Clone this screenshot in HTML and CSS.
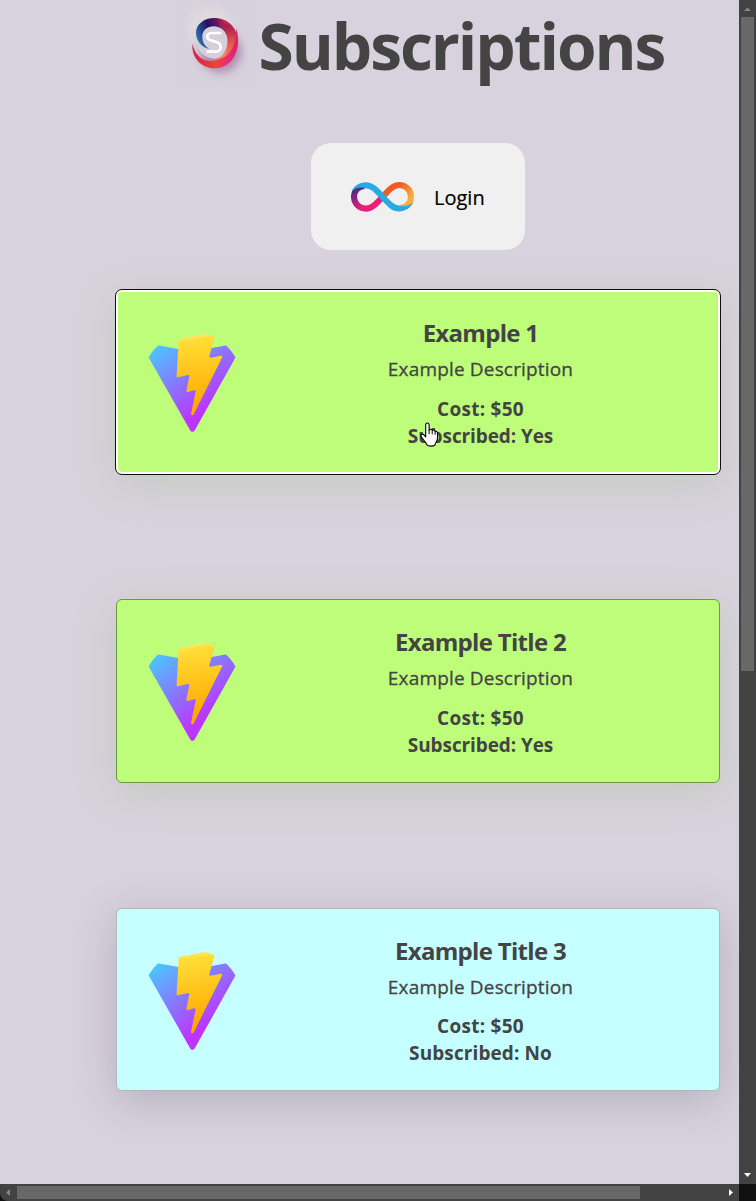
FILE: index.html
```html
<!DOCTYPE html>
<html lang="en">
<head>
<meta charset="utf-8">
<title>Subscriptions</title>
<link rel="stylesheet" href="styles.css">
</head>
<body>
<svg width="0" height="0" class="defs" aria-hidden="true">
  <defs>
    <linearGradient id="shield" x1="-.828%" x2="57.636%" y1="7.652%" y2="78.411%"><stop offset="0" stop-color="#41D1FF"/><stop offset="1" stop-color="#BD34FE"/></linearGradient>
    <linearGradient id="bolt" x1="43.376%" x2="50.316%" y1="2.242%" y2="89.03%"><stop offset="0" stop-color="#FFEA83"/><stop offset=".0833" stop-color="#FFDD35"/><stop offset="1" stop-color="#FFA800"/></linearGradient>
    <symbol id="vite" viewBox="0 0 256 257">
      <path fill="url(#shield)" d="M255.153 37.938L134.897 252.976c-2.483 4.44-8.862 4.466-11.382.048L.875 37.958c-2.746-4.814 1.371-10.646 6.827-9.67l120.385 21.517a6.537 6.537 0 0 0 2.322-.004l117.867-21.483c5.438-.991 9.574 4.796 6.877 9.62Z"/>
      <path fill="url(#bolt)" d="M185.432.063L96.44 17.501a3.268 3.268 0 0 0-2.634 3.014l-5.474 92.456a3.268 3.268 0 0 0 3.997 3.378l24.777-5.718c2.318-.535 4.413 1.507 3.936 3.838l-7.361 36.047c-.495 2.426 1.782 4.5 4.151 3.78l15.304-4.649c2.372-.72 4.652 1.36 4.15 3.788l-11.698 56.621c-.732 3.542 3.979 5.473 5.943 2.437l1.313-2.028l72.516-144.72c1.215-2.423-.88-5.186-3.54-4.672l-25.505 4.922c-2.396.462-4.435-1.77-3.759-4.114l16.646-57.705c.677-2.35-1.37-4.583-3.769-4.113Z"/>
    </symbol>
  </defs>
</svg>
<div class="window">
  <main class="page">
    <header class="header">
      <svg class="brand" viewBox="0 0 249 252">
        <defs>
          <linearGradient id="ringTop" x1="66" y1="145" x2="190" y2="95" gradientUnits="userSpaceOnUse"><stop offset="0" stop-color="#2d8fc0"/><stop offset=".25" stop-color="#25408c"/><stop offset=".42" stop-color="#24125f"/><stop offset=".62" stop-color="#5d1760"/><stop offset=".82" stop-color="#c9264b"/><stop offset="1" stop-color="#b51c43"/></linearGradient>
          <linearGradient id="ringLow" x1="70" y1="140" x2="200" y2="150" gradientUnits="userSpaceOnUse"><stop offset="0" stop-color="#d72945"/><stop offset=".45" stop-color="#f0413e"/><stop offset=".75" stop-color="#e22b78"/><stop offset="1" stop-color="#d71d49"/></linearGradient>
          <linearGradient id="ringIn" x1="150" y1="80" x2="160" y2="190" gradientUnits="userSpaceOnUse"><stop offset="0" stop-color="#a31f50"/><stop offset=".45" stop-color="#ee5a4a"/><stop offset=".8" stop-color="#f98455"/><stop offset="1" stop-color="#f04b45"/></linearGradient>
          <filter id="soft" x="-60%" y="-60%" width="220%" height="220%"><feGaussianBlur stdDeviation="15"/></filter>
        </defs>
        <rect width="249" height="252" fill="#d5d1dc" opacity=".65"/>
        <circle cx="104" cy="88" r="70" fill="#e4dde0" opacity=".65" filter="url(#soft)"/>
        <circle cx="136" cy="154" r="62" fill="#a36d9d" opacity=".75" filter="url(#soft)"/>
        <circle cx="118" cy="124" r="52" fill="#d3cfdb"/>
        <path fill="url(#ringTop)" d="M106 148C78 142 63 121 63 99C63 72 88 54 118 54C158 54 188 82 188 125C188 165 157 190 128 190C153 174 162 151 159 119C156 94 137 79 116 79C94 79 80 94 82 114C84 132 92 141 106 148Z"/>
        <path fill="url(#ringIn)" d="M133 66C172 74 188 98 186 127C181 170 144 193 104 185C140 178 158 153 157 119C156 100 147 87 133 80Z" opacity=".9"/>
        <path fill="url(#ringLow)" d="M53 131C60 166 82 187 119 182C157 177 183 149 184 85C201 142 177 204 119 205C76 204 47 168 53 131Z"/>
        <path d="M139 99H110C99 99 95 107 98 114C102 125 132 122 136 135C140 147 134 155 121 155H95" fill="none" stroke="#fff" stroke-width="8"/>
      </svg>
      <h1 class="title">Subscriptions</h1>
    </header>
    <button class="login">
      <svg class="infinity" viewBox="153 156 187 88">
        <defs>
          <linearGradient id="pink" x1="165" y1="170" x2="205" y2="235" gradientUnits="userSpaceOnUse"><stop offset=".1" stop-color="#522785"/><stop offset=".85" stop-color="#ed1e79"/></linearGradient>
          <linearGradient id="orange" x1="270" y1="160" x2="335" y2="215" gradientUnits="userSpaceOnUse"><stop offset=".25" stop-color="#f15a24"/><stop offset=".9" stop-color="#fbb03b"/></linearGradient>
        </defs>
        <path d="M246.500 199.500C228 220 215 234.500 197 234.500C177 234.500 162 219 162 199.500C162 181 175 168 193 167" fill="none" stroke="url(#pink)" stroke-width="18"/>
        <path d="M246.500 199.500C265 179 278 164.500 296 164.500C316 164.500 331 180 331 199.500C331 218 318 231 300 232" fill="none" stroke="url(#orange)" stroke-width="18"/>
        <path d="M197 165C215 165 228 179 246.500 199.500S278 234 296 234" fill="none" stroke="#29abe2" stroke-width="18"/>
        <path d="M198 156C178 156 161 168 155 184C166 173 180 169 198 174Z" fill="#29abe2"/>
        <path d="M295 243C315 243 332 231 338 215C327 226 313 230 295 225Z" fill="#29abe2"/>
      </svg>
      <span class="login-label">Login</span>
    </button>
    <section class="cards">
      <article class="card subscribed focused">
        <svg class="card-logo"><use href="#vite"/></svg>
        <div class="card-body">
          <h2 class="card-title">Example 1</h2>
          <p class="description">Example Description</p>
          <p class="fact cost">Cost: $50</p>
          <p class="fact status">Subscribed: Yes</p>
        </div>
        <svg class="pointer" viewBox="0 0 18 25">
          <path d="M5.700 15V2.800C5.700 .3 9.100 .3 9.100 2.800V8.200C10.100 6.700 12 7.100 12.200 8.500C13.400 7.500 15 8.100 15.100 9.500C16.400 8.900 17.500 9.800 17.500 11.300V16C17.500 19 15.300 20.600 15 23C13 24.500 8.500 24.500 7 22.900C5.800 20.200 3.300 18.200 1.300 14.700C.2 12.900 2.300 11.200 3.900 12.800Z" fill="#fff" stroke="#000" stroke-width="1.100" stroke-linejoin="round"/>
          <path d="M9.100 8V12.200M12.200 8.500V12.400M15.100 9.500V12.800" stroke="#000" fill="none"/>
        </svg>
      </article>
      <article class="card subscribed">
        <svg class="card-logo"><use href="#vite"/></svg>
        <div class="card-body">
          <h2 class="card-title">Example Title 2</h2>
          <p class="description">Example Description</p>
          <p class="fact cost">Cost: $50</p>
          <p class="fact status">Subscribed: Yes</p>
        </div>
      </article>
      <article class="card available">
        <svg class="card-logo"><use href="#vite"/></svg>
        <div class="card-body">
          <h2 class="card-title">Example Title 3</h2>
          <p class="description">Example Description</p>
          <p class="fact cost">Cost: $50</p>
          <p class="fact status">Subscribed: No</p>
        </div>
      </article>
    </section>
  </main>
  <div class="scroll vertical">
    <svg class="arrow dim" viewBox="0 0 17 17"><path d="M5 11L8.500 7.500L12 11Z"/></svg>
    <div class="thumb"></div>
    <svg class="arrow" viewBox="0 0 17 17"><path d="M5 6H12L8.500 10Z"/></svg>
  </div>
  <div class="scroll horizontal">
    <svg class="arrow dim" viewBox="0 0 17 17"><path d="M10 5V12L6 8.500Z"/></svg>
    <div class="thumb"></div>
    <svg class="arrow" viewBox="0 0 17 17"><path d="M7 5L11 8.500L7 12Z"/></svg>
  </div>
  <div class="corner"></div>
</div>
</body>
</html>
```
FILE: styles.css
```css
* { box-sizing: border-box; }
body {
  margin: 0;
  background: #111;
  color: #444;
  font-family: "Segoe UI", "Open Sans", "Noto Sans", sans-serif;
}
h1, h2, p { margin: 0; }
.defs { position: absolute; }
.window {
  display: grid;
  grid-template: 1184px 17px / 739px 17px;
  height: 1201px;
  overflow: hidden;
  border-bottom-left-radius: 8px;
}
.page {
  display: flex;
  flex-direction: column;
  align-items: center;
  padding-left: 97px;
  background: #d8d2de;
  overflow: hidden;
}
.header {
  display: flex;
  height: 143px;
  width: 487px;
  flex-shrink: 0;
}
.brand { width: 83px; height: 84px; flex-shrink: 0; }
.title {
  font-size: 64px;
  line-height: 70px;
  font-weight: 700;
  letter-spacing: -2.05px;
  margin-top: 11px;
  margin-left: 1px;
  white-space: nowrap;
}
.login {
  display: flex;
  align-items: center;
  width: 214px;
  height: 107px;
  flex-shrink: 0;
  padding: 0 40px;
  border: 0;
  border-radius: 20px;
  background: #f0f0f0;
  color: #000;
  font: 500 20px/28px "Segoe UI", "Open Sans", "Noto Sans", sans-serif;
}
.infinity { width: 63px; height: 30px; flex-shrink: 0; }
.login-label { margin-left: 20px; padding-top: 2px; -webkit-text-stroke: .2px; }
.cards {
  display: flex;
  flex-direction: column;
  gap: 125px;
  margin-top: 40px;
}
.card {
  position: relative;
  display: flex;
  width: 604px;
  height: 184px;
  flex-shrink: 0;
  padding: 0 0 0 25px;
  align-items: center;
  border: 1px solid #b4b6b8;
  border-radius: 6px;
  background: #c5ffff;
  box-shadow: 0 10px 44px rgba(65, 50, 75, .22);
}
.card.available { height: 183px; }
.card.subscribed {
  background: #befd7a;
  border-color: #6f9547;
  box-shadow: 0 9px 42px rgba(184, 198, 174, .65);
}
.card.focused {
  border: 0;
  padding-left: 26px;
  box-shadow: inset 0 0 0 2px #fff, 0 9px 42px rgba(184, 198, 174, .65);
  outline: 1px solid #101010;
}
.card-logo { width: 100px; height: 100px; border-radius: 50%; flex-shrink: 0; }
.card-body {
  display: flex;
  flex-direction: column;
  align-items: center;
  width: 477px;
  height: 100%;
  padding-top: 25px;
  white-space: nowrap;
}
.focused .card-body { padding-top: 26px; }
.card-title { font-size: 24px; line-height: 34px; font-weight: 700; letter-spacing: -.7px; }
.description {
  font-size: 19px;
  line-height: 28px;
  font-weight: 500;
  letter-spacing: .17px;
  -webkit-text-stroke: .3px;
  margin-top: 5px;
}
.fact { font-size: 19px; line-height: 27px; font-weight: 700; letter-spacing: -.1px; }
.cost { margin-top: 13px; letter-spacing: .25px; }
.available .cost { margin-top: 12px; }
.available .status { letter-spacing: .1px; }
.pointer { position: absolute; left: 304px; top: 132px; width: 18px; height: 25px; }
.scroll { display: flex; background: #424242; }
.scroll .thumb { background: #686868; }
.vertical { flex-direction: column; justify-content: space-between; }
.vertical .thumb { width: 13px; height: 654px; margin: 0 2px auto; }
.horizontal .thumb { width: 623px; height: 13px; margin: 2px auto 2px 0; }
.arrow { width: 17px; height: 17px; fill: #fff; flex-shrink: 0; }
.arrow.dim { fill: #858585; }
.corner { background: #111; }
```
